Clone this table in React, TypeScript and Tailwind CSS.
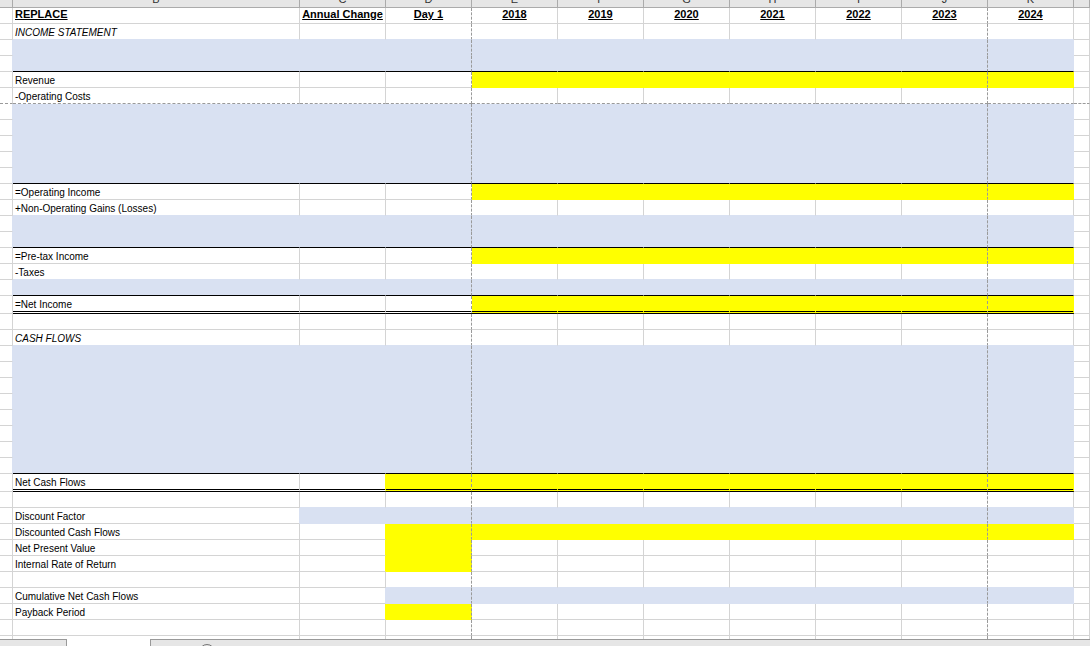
import React from 'react';

type Fill = 'b' | 'y';

interface Row {
  label?: string;
  italic?: boolean;
  title?: boolean;
  fill?: [number, number, Fill][];
  bottom?: 'black' | 'double' | 'dash';
  tall?: boolean;
}

const LETTERS = ['', 'B', 'C', 'D', 'E', 'F', 'G', 'H', 'I', 'J', 'K', ''];
const YEARS = ['2018', '2019', '2020', '2021', '2022', '2023', '2024'];

const BG: Record<Fill, string> = {
  b: 'bg-[#d9e1f2]',
  y: 'bg-[#ffff00]',
};

const BORDER_R: Record<string, string> = {
  grid: 'border-r-[#d4d4d4]',
  b: 'border-r-[#d9e1f2]',
  y: 'border-r-[#ffff00]',
  dash: 'border-r-[#9a9a9a] [border-right-style:dashed]',
};

const BORDER_B: Record<string, string> = {
  grid: 'border-b-[#d4d4d4]',
  b: 'border-b-[#d9e1f2]',
  y: 'border-b-[#ffff00]',
  black: 'border-b-black',
  double: 'border-b-black border-b-[3px] [border-bottom-style:double]',
  dash: 'border-b-[#9a9a9a] [border-bottom-style:dashed]',
};

const blue = (bottom?: 'black'): Row => ({ fill: [[1, 10, 'b']], bottom });
const yellowEK: [number, number, Fill][] = [[4, 10, 'y']];

const rows: Row[] = [
  { title: true },
  { label: 'INCOME STATEMENT', italic: true },
  blue(),
  blue('black'),
  { label: 'Revenue', fill: yellowEK },
  { label: '-Operating Costs', bottom: 'dash' },
  blue(),
  blue(),
  blue(),
  blue(),
  blue('black'),
  { label: '=Operating Income', fill: yellowEK },
  { label: '+Non-Operating Gains (Losses)' },
  blue(),
  blue('black'),
  { label: '=Pre-tax Income', fill: yellowEK },
  { label: '-Taxes' },
  blue('black'),
  { label: '=Net Income', fill: yellowEK, bottom: 'double', tall: true },
  {},
  { label: 'CASH FLOWS', italic: true },
  blue(),
  blue(),
  blue(),
  blue(),
  blue(),
  blue(),
  blue(),
  blue('black'),
  { label: 'Net Cash Flows', fill: [[3, 10, 'y']], bottom: 'double', tall: true },
  {},
  { label: 'Discount Factor', fill: [[2, 10, 'b']] },
  { label: 'Discounted Cash Flows', fill: [[3, 10, 'y']] },
  { label: 'Net Present Value', fill: [[3, 3, 'y']] },
  { label: 'Internal Rate of Return', fill: [[3, 3, 'y']] },
  {},
  { label: 'Cumulative Net Cash Flows', fill: [[3, 10, 'b']] },
  { label: 'Payback Period', fill: [[3, 3, 'y']] },
  {},
  {},
  {},
];

function fillAt(row: Row | undefined, col: number): Fill | undefined {
  if (!row || !row.fill) return undefined;
  for (const [a, b, f] of row.fill) {
    if (col >= a && col <= b) return f;
  }
  return undefined;
}

function HeaderRow() {
  return (
    <div className="grid grid-cols-[13px_287px_repeat(9,86px)_1fr] h-[8px] bg-[#e6e6e6]">
      {LETTERS.map((l, i) => (
        <div
          key={i}
          className="flex items-end justify-center overflow-hidden border-r border-b border-[#ababab]"
        >
          <span className="mb-[2px] text-[11px] leading-none text-[#333]">{l}</span>
        </div>
      ))}
    </div>
  );
}

function TitleContent({ col }: { col: number }) {
  const cls = 'text-[11px] font-bold underline leading-none';
  if (col === 1) return <span className={cls}>REPLACE</span>;
  if (col === 2) return <span className={cls}>Annual Change</span>;
  if (col === 3) return <span className={cls}>Day 1</span>;
  if (col >= 4 && col <= 10) return <span className={cls}>{YEARS[col - 4]}</span>;
  return null;
}

function SheetRow({ row, next }: { row: Row; next?: Row }) {
  return (
    <div
      className={`grid grid-cols-[13px_287px_repeat(9,86px)_1fr] ${row.tall ? 'h-[18px]' : 'h-[16px]'}`}
    >
      {LETTERS.map((_, col) => {
        const own = fillAt(row, col);
        const right = fillAt(row, col + 1);
        const below = fillAt(next, col);

        let r = own || right || 'grid';
        if (col === 3 || col === 9) r = 'dash';

        let b: string = own || below || 'grid';
        if (row.bottom === 'dash') b = 'dash';
        else if (row.bottom && col >= 1 && col <= 10) b = row.bottom;

        const align = row.title
          ? col === 1
            ? 'justify-start pl-[2px] pb-[3px]'
            : 'justify-center pb-[3px]'
          : 'justify-start pl-[2px] pb-[1px]';

        return (
          <div
            key={col}
            className={`flex items-end overflow-visible whitespace-nowrap border-r border-b ${BORDER_R[r]} ${BORDER_B[b]} ${own ? BG[own] : ''} ${align}`}
          >
            {row.title ? (
              <TitleContent col={col} />
            ) : col === 1 && row.label ? (
              <span className={`text-[10px] leading-none ${row.italic ? 'italic' : ''}`}>
                {row.label}
              </span>
            ) : null}
          </div>
        );
      })}
    </div>
  );
}

export default function App() {
  return (
    <div className="w-[1090px] h-[646px] overflow-hidden bg-white text-black font-['Liberation_Sans',Arial,sans-serif] flex flex-col">
      <div className="h-[639px] overflow-hidden">
        <HeaderRow />
        {rows.map((row, i) => (
          <SheetRow key={i} row={row} next={rows[i + 1]} />
        ))}
      </div>
      <div className="flex h-[7px]">
        <div className="w-[67px] bg-[#e6e6e6] border-t border-r border-[#999]" />
        <div className="w-[83px] bg-white" />
        <div className="flex-1 overflow-hidden bg-[#e6e6e6] border-t border-l border-[#999]">
          <div className="ml-[48px] mt-[4px] w-[16px] h-[16px] rounded-full border border-[#777]" />
        </div>
      </div>
    </div>
  );
}
